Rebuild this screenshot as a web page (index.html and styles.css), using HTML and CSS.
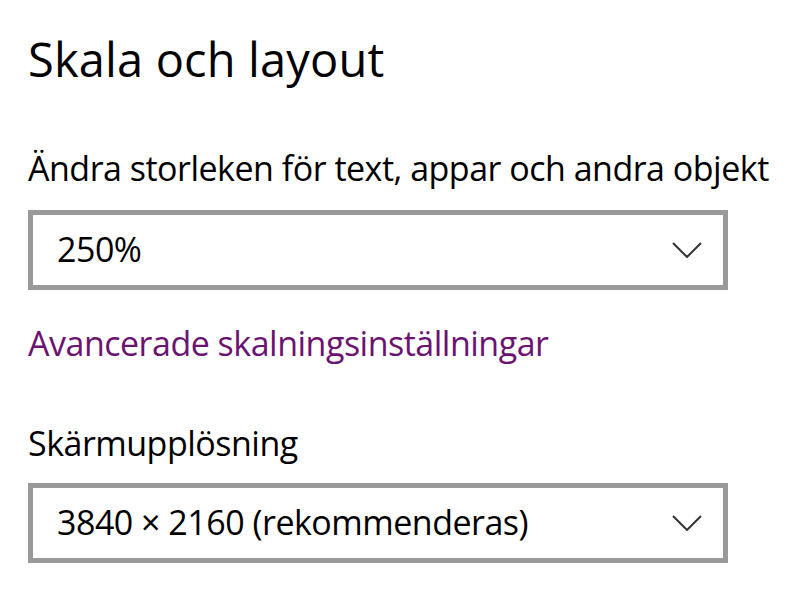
FILE: index.html
```html
<!DOCTYPE html>
<html lang="sv">
<head>
<meta charset="utf-8">
<title>Skala och layout</title>
<link rel="stylesheet" href="styles.css">
</head>
<body>
<main class="page">
  <h1 class="title">Skala och layout</h1>
  <label class="label label-first">Ändra storleken för text, appar och andra objekt</label>
  <div class="select select-first">
    <span class="select-value">250%</span>
    <svg class="chevron" width="30" height="16" viewBox="0 0 30 16" aria-hidden="true">
      <polyline points="1,1 15,15 29,1" fill="none" stroke="#333" stroke-width="2"/>
    </svg>
  </div>
  <a class="link" href="#">Avancerade skalningsinställningar</a>
  <label class="label label-second">Skärmupplösning</label>
  <div class="select select-second">
    <span class="select-value">3840 × 2160 (rekommenderas)</span>
    <svg class="chevron" width="30" height="16" viewBox="0 0 30 16" aria-hidden="true">
      <polyline points="1,1 15,15 29,1" fill="none" stroke="#333" stroke-width="2"/>
    </svg>
  </div>
</main>
</body>
</html>
```
FILE: styles.css
```css
html, body {
  margin: 0;
  padding: 0;
  background: #ffffff;
}
body {
  font-family: "Open Sans", "Noto Sans", sans-serif;
  color: #000;
  width: 785px;
  height: 590px;
  overflow: hidden;
}
.page {
  display: flex;
  flex-direction: column;
  align-items: flex-start;
  padding-left: 28px;
}
.title {
  margin: 29px 0 0 0;
  font-size: 47px;
  font-weight: 400;
  line-height: 60px;
  letter-spacing: 0.15px;
  white-space: nowrap;
}
.label {
  display: block;
  font-size: 34px;
  line-height: 46px;
  letter-spacing: -0.5px;
  white-space: nowrap;
}
.label-first {
  margin-top: 56px;
}
.label-second {
  margin-top: 54px;
}
.select {
  box-sizing: border-box;
  width: 700px;
  height: 80px;
  border: 5px solid #999999;
  display: flex;
  align-items: center;
  justify-content: space-between;
  padding: 0 21px 0 24px;
  font-size: 34px;
  line-height: 46px;
  letter-spacing: -0.5px;
  white-space: nowrap;
}
.select-first {
  margin-top: 19px;
}
.select-second {
  margin-top: 17px;
}
.select-value {
  margin-top: -2px;
}
.chevron {
  display: block;
}
.link {
  margin-top: 30px;
  font-size: 34px;
  line-height: 46px;
  letter-spacing: -0.5px;
  white-space: nowrap;
  color: #6b1370;
  text-decoration: none;
}
```
